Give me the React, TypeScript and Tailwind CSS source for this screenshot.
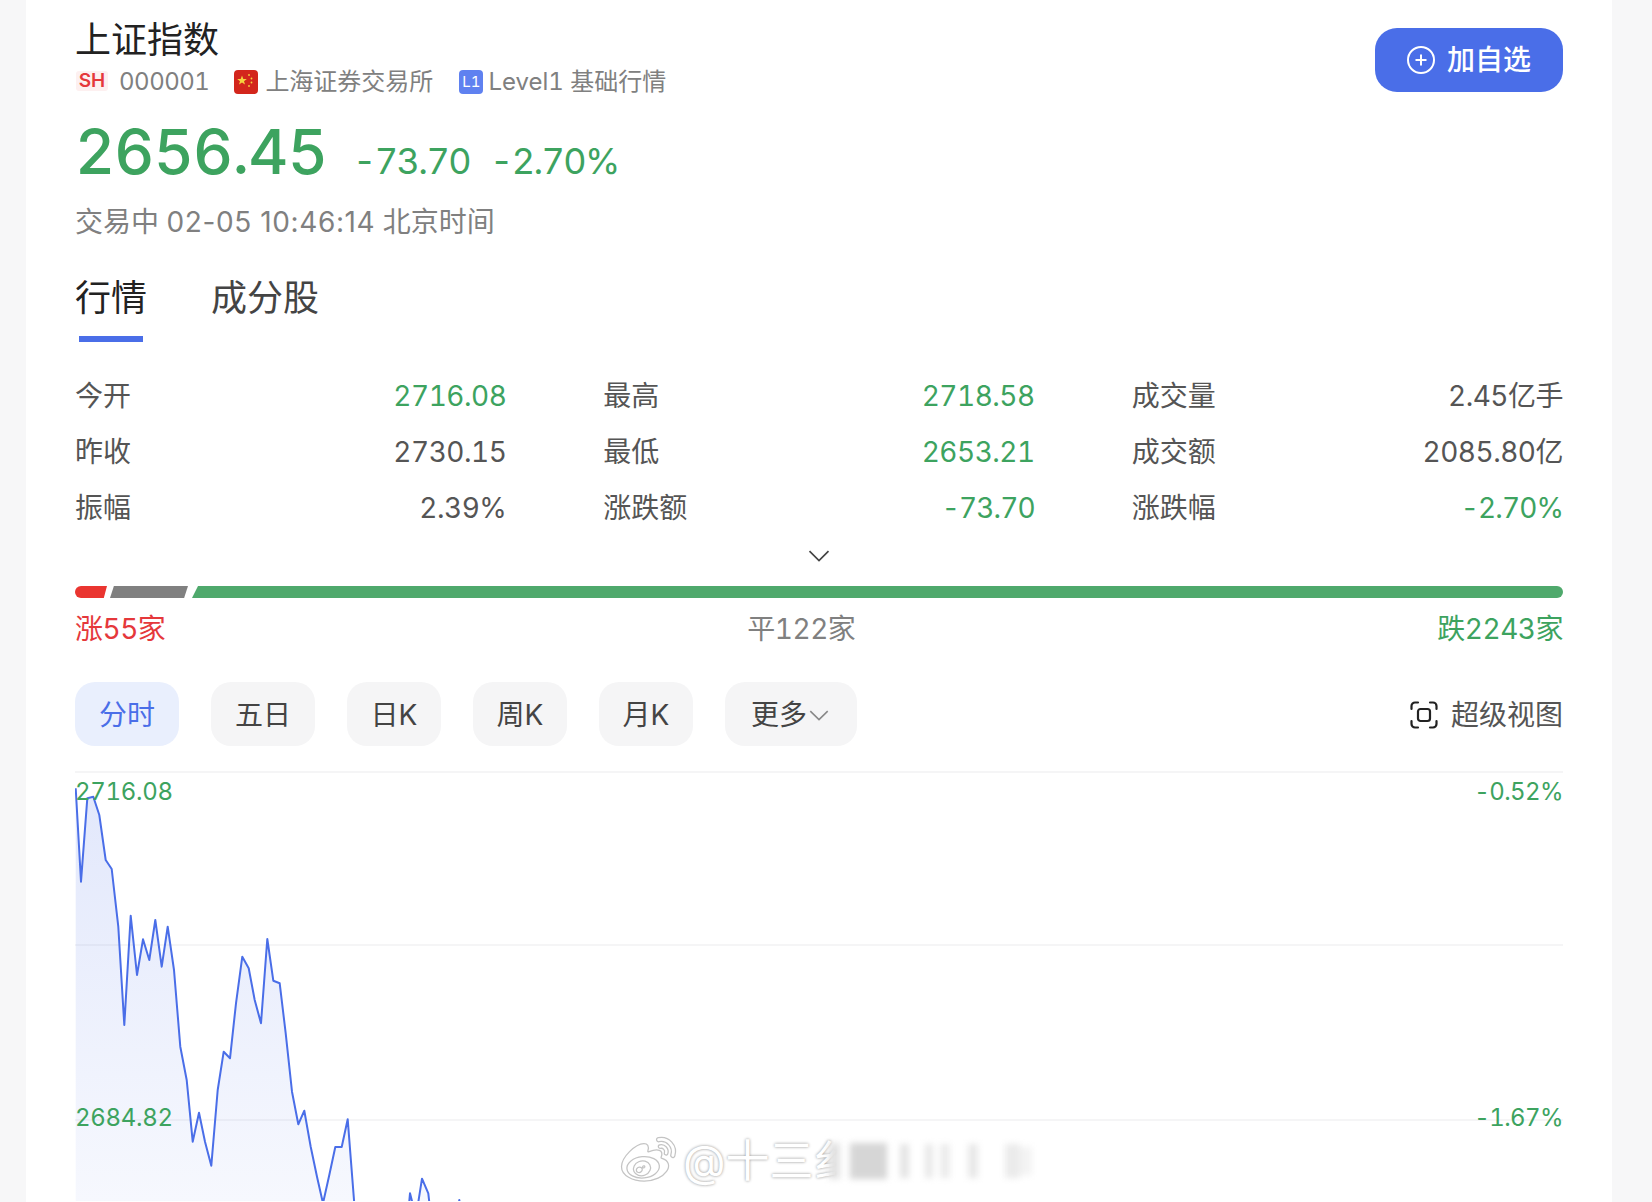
import React from "react";
import { FaWeibo } from "react-icons/fa";

const font = "font-['Inter','Noto_Sans_CJK_SC',sans-serif] tabular-nums";

const stats = [
  { label: "今开", value: "2716.08", green: true },
  { label: "最高", value: "2718.58", green: true },
  { label: "成交量", value: "2.45亿手", green: false },
  { label: "昨收", value: "2730.15", green: false },
  { label: "最低", value: "2653.21", green: true },
  { label: "成交额", value: "2085.80亿", green: false },
  { label: "振幅", value: "2.39%", green: false },
  { label: "涨跌额", value: "-73.70", green: true },
  { label: "涨跌幅", value: "-2.70%", green: true },
];

const periods = [
  { label: "五日", width: "w-[104px]" },
  { label: "日K", width: "w-[94px]" },
  { label: "周K", width: "w-[94px]" },
  { label: "月K", width: "w-[94px]" },
];

// traced from the intraday line, x/3 and y/3 give chart pixels
const trace: [number, number][] = [
  [47, 55], [63, 335], [82, 85], [100, 80], [118, 135], [137, 270], [155, 297], [175, 470],
  [193, 765], [212, 437], [231, 615], [249, 508], [268, 570], [286, 450], [305, 590], [323, 470],
  [342, 600], [361, 830], [380, 930], [398, 1115], [417, 1028], [435, 1115], [454, 1187], [473, 960],
  [491, 845], [510, 865], [528, 700], [547, 560], [566, 595], [584, 690], [603, 760], [622, 507],
  [640, 632], [659, 640], [677, 790], [696, 965], [715, 1063], [733, 1022], [752, 1130], [771, 1220],
  [789, 1300], [808, 1215], [826, 1131], [845, 1131], [863, 1048], [882, 1290], [900, 1500], [1030, 1500],
  [1050, 1270], [1068, 1340], [1086, 1226], [1105, 1270], [1125, 1450], [1180, 1400], [1198, 1290],
  [1215, 1400], [1300, 1500],
];
const line = trace.map(([x, y]) => `${(x / 3 - 15).toFixed(1)},${(y / 3 - 1).toFixed(1)}`).join(" ");
const area = `${line} 418.3,430 0.7,430`;

function Chevron({ className }: { className: string }) {
  return (
    <svg viewBox="0 0 22 12" fill="none" stroke="currentColor" strokeWidth="1.7" className={className}>
      <path d="M1.5 1.2 11 10.5l9.500-9.300" />
    </svg>
  );
}

function Flag() {
  return (
    <svg viewBox="0 0 24 24" className="w-6 h-6">
      <rect width="24" height="24" rx="4" fill="#d3261c" />
      <path d="m8 5.500 1.300 3.400 3.500.1-2.800 2.200 1 3.400-3-2-3 2 1-3.400L3.200 9l3.500-.1z" fill="#f5d33f" />
      <circle cx="15" cy="5" r="0.9" fill="#f5d33f" />
      <circle cx="17.500" cy="8.500" r="0.9" fill="#f5d33f" />
      <circle cx="17.500" cy="12.500" r="0.9" fill="#f5d33f" />
      <circle cx="15" cy="16" r="0.9" fill="#f5d33f" />
    </svg>
  );
}

export default function App() {
  return (
    <div className={`${font} h-[1202px] overflow-hidden bg-[#f7f7f8]`}>
      <div className="ml-[26px] w-[1586px] h-full bg-white px-[49px] pt-5">
        <div className="flex justify-between">
          <div>
            <div className="h-10 text-[36px] leading-10 text-[#222]">上证指数</div>
            <div className="mt-[10px] h-6 flex items-center text-[24px] leading-6 text-[#808080]">
              <span className="w-[32px] h-[20px] ml-px -mt-[2px] rounded-[3px] bg-[#fdf0f0] text-[#e5383b] text-[19px] leading-5 font-semibold text-center">SH</span>
              <span className="ml-[11px] tracking-[-0.5px]">000001</span>
              <span className="ml-[25px]"><Flag /></span>
              <span className="ml-[7px]">上海证券交易所</span>
              <span className="ml-[26px] w-6 h-6 rounded-[4px] bg-[#5f81f0] text-white text-[15px] leading-6 text-center">L1</span>
              <span className="ml-[5px]">Level1 基础行情</span>
            </div>
          </div>
          <button className="mt-2 w-[188px] h-16 rounded-[22px] bg-[#4a6ee8] text-white flex items-center justify-center gap-[12px] text-[28px]">
            <svg viewBox="0 0 28 28" fill="none" stroke="currentColor" strokeWidth="2" className="w-7 h-7">
              <circle cx="14" cy="14" r="13" />
              <path d="M14 8.500v11M8.500 14h11" />
            </svg>
            <span className="font-medium">加自选</span>
          </button>
        </div>

        <div className="mt-[26px] h-[62px] flex items-baseline text-[#3da35f]">
          <span className="text-[62px] leading-[64px] font-medium tracking-[-0.8px]">2656.45</span>
          <span className="ml-[26px] text-[36px] tracking-[-1.6px]">-73.70</span>
          <span className="ml-[20px] text-[36px] tracking-[-1.6px]">-2.70%</span>
        </div>
        <div className="mt-[22px] h-9 text-[28px] leading-9 text-[#808080]">
          交易中 <span className="[font-variant-numeric:normal] tracking-[0.6px]">02-05 10:46:14</span> 北京时间
        </div>

        <div className="mt-9 flex gap-[64px] h-11 text-[36px] leading-[44px]">
          <span className="text-[#222]">行情</span>
          <span className="text-[#444]">成分股</span>
        </div>
        <div className="mt-4 ml-[4px] w-16 h-[6px] bg-[#4a6ee8]" />

        <div className="mt-[25px] grid grid-cols-3 gap-x-[97px]">
          {stats.map((s) => (
            <div key={s.label} className="h-14 pt-px flex items-center justify-between text-[28px]">
              <span className="text-[#555]">{s.label}</span>
              <span className={`${s.green ? "text-[#3da35f]" : "text-[#555]"} ${s.value.startsWith("-") ? "tracking-[-0.9px]" : "tracking-[-0.5px]"}`}>{s.value}</span>
            </div>
          ))}
        </div>

        <div className="mt-[10px] h-[22px] flex items-center justify-center">
          <Chevron className="w-[22px] h-3 text-[#444]" />
        </div>

        <div className="mt-[19px] flex h-3 gap-1">
          <div className="w-[32px] rounded-l-md bg-[#ea3530] [clip-path:polygon(0_0,100%_0,90%_100%,0_100%)]" />
          <div className="w-[78px] -ml-[1px] bg-[#808080] [clip-path:polygon(5%_0,100%_0,95%_100%,0_100%)]" />
          <div className="flex-1 rounded-r-md bg-[#4fa96c] [clip-path:polygon(6px_0,100%_0,100%_100%,0_100%)]" />
        </div>
        <div className="mt-[13px] h-9 flex justify-between text-[28px] leading-9 tracking-[-0.5px]">
          <span className="text-[#e5383b]">涨55家</span>
          <span className="text-[#808080]">平122家</span>
          <span className="text-[#3da35f]">跌2243家</span>
        </div>

        <div className="mt-[35px] flex items-center gap-8 text-[28px]">
          <span className="w-[104px] h-16 pt-[2px] rounded-[20px] bg-[#e9effd] text-[#4a6ee8] flex items-center justify-center">分时</span>
          {periods.map((p) => (
            <span key={p.label} className={`${p.width} h-16 pt-[2px] rounded-[20px] bg-[#f5f5f6] text-[#444] flex items-center justify-center`}>{p.label}</span>
          ))}
          <span className="w-[132px] h-16 pt-[2px] rounded-[20px] bg-[#f5f5f6] text-[#444] flex items-center justify-center">
            更多<Chevron className="w-[24px] h-[11px] text-[#888]" />
          </span>
          <span className="ml-auto pt-[2px] flex items-center gap-[13px] text-[#555]">
            <svg viewBox="0 0 28 28" fill="none" stroke="#222" strokeWidth="2.200" strokeLinecap="round" className="w-7 h-7">
              <path d="M1.500 8V5a3.500 3.500 0 0 1 3.500-3.500h3M20 1.500h3A3.500 3.500 0 0 1 26.500 5v3M26.500 20v3a3.500 3.500 0 0 1-3.500 3.500h-3M8 26.500H5A3.500 3.500 0 0 1 1.500 23v-3" />
              <rect x="8" y="8" width="12" height="12" rx="2.500" />
            </svg>
            超级视图
          </span>
        </div>

        <div className="relative mt-[25px]">
          <div className="h-[175px] border-y-2 border-[#f5f5f6]" />
          <div className="h-[175px] border-b-2 border-[#f5f5f6]" />
          <svg viewBox="0 0 1488 430" className="absolute left-0 top-0 w-[1488px] h-[430px]">
            <defs>
              <linearGradient id="fill" x1="0" y1="0" x2="0" y2="1">
                <stop offset="0" stopColor="#4a6ee8" stopOpacity="0.16" />
                <stop offset="1" stopColor="#4a6ee8" stopOpacity="0.03" />
              </linearGradient>
            </defs>
            <polygon points={area} fill="url(#fill)" />
            <polyline points={line} fill="none" stroke="#4a6ee8" strokeWidth="2" strokeLinejoin="round" />
          </svg>
          <div className="absolute left-0 top-[7px] text-[24px] leading-7 tracking-[-0.3px] text-[#3da35f]">2716.08</div>
          <div className="absolute right-0 top-[7px] text-[24px] leading-7 tracking-[-0.6px] text-[#3da35f]">-0.52%</div>
          <div className="absolute left-0 top-[333px] text-[24px] leading-7 tracking-[-0.3px] text-[#3da35f]">2684.82</div>
          <div className="absolute right-0 top-[333px] text-[24px] leading-7 tracking-[-0.6px] text-[#3da35f]">-1.67%</div>
        </div>
      </div>

      {/* weibo watermark, the name is partly blurred in the shot */}
      <div className="absolute left-[617px] top-[1136px] flex items-center h-[50px] text-white text-[44px] leading-[50px] [text-shadow:0_0_3px_#8a8a8a]">
        <FaWeibo className="w-[63px] h-[54px] [stroke:#c4c4c4] [stroke-width:12]" />
        <span className="ml-[3px]">@十三纟</span>
        <div className="flex items-center blur-[3px] -ml-[29px]">
          <div className="w-[11px] h-[36px] bg-[#e2e2e2]" />
          <div className="ml-[10px] w-[37px] h-[36px] bg-[#d6d6d6]" />
          <div className="ml-[13px] w-[9px] h-[34px] bg-[#e4e4e4]" />
          <div className="ml-[16px] w-[8px] h-[34px] bg-[#e8e8e8]" />
          <div className="ml-[7px] w-[10px] h-[34px] bg-[#ececec]" />
          <div className="ml-[18px] w-[10px] h-[34px] bg-[#e8e8e8]" />
          <div className="ml-[27px] w-[15px] h-[34px] bg-[#ebebeb]" />
          <div className="w-[12px] h-[28px] bg-[#f3f3f3]" />
        </div>
      </div>
    </div>
  );
}
